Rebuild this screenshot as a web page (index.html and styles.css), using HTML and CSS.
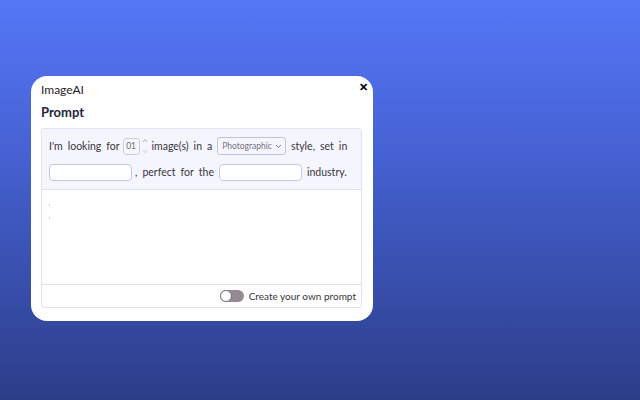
FILE: index.html
```html
<!DOCTYPE html>
<html lang="en">
<head>
    <meta charset="UTF-8" />
    <title>ImageAI</title>
    <link rel="stylesheet" href="styles.css">
</head>
<body>
    <div class="card">
        <div class="card-head">
            <span class="brand">ImageAI</span>
            <span class="close">&#10005;</span>
        </div>
        <h2 class="title">Prompt</h2>
        <div class="prompt">
            <div class="sentence">
                <div class="line">
                    <span>I'm</span><span>looking</span><span>for</span>
                    <span class="num">01</span>
                    <svg class="spin" width="6" height="16" viewBox="0 0 6 16">
                        <path d="M1 4l2-2.5L5 4" fill="none" stroke="#9a9aa8" stroke-width="0.8"/>
                        <path d="M1 12l2 2.5L5 12" fill="none" stroke="#c4c4d0" stroke-width="0.8"/>
                    </svg>
                    <span>image(s)</span><span>in</span><span>a</span>
                    <span class="select">Photographic
                        <svg width="7" height="5" viewBox="0 0 7 5"><path d="M1 1l2.5 2.5L6 1" fill="none" stroke="#6b6fd6" stroke-width="1"/></svg>
                    </span>
                    <span>style,</span><span>set</span><span>in</span>
                </div>
                <div class="line">
                    <span class="field"></span>
                    <span>,</span><span>perfect</span><span>for</span><span>the</span>
                    <span class="field"></span>
                    <span>industry.</span>
                </div>
            </div>
            <div class="editor">
                <i class="dot"></i>
                <i class="dot"></i>
            </div>
            <div class="footer">
                <span class="toggle"><span class="knob"></span></span>
                <span>Create your own prompt</span>
            </div>
        </div>
    </div>
</body>
</html>
```

FILE: styles.css
```css
html, body {
    margin: 0;
    padding: 0;
}
body {
    width: 640px;
    height: 400px;
    background: linear-gradient(180deg, #5577f7 0%, #4763d6 35%, #3a52b2 65%, #2c3d88 100%);
    font-family: Lato, "Open Sans", sans-serif;
    color: #2d2a33;
    padding: 76px 0 0 31px;
    box-sizing: border-box;
}
.card {
    width: 342px;
    height: 245px;
    box-sizing: border-box;
    background: #fff;
    border-radius: 16px;
    padding: 4px 11px 13px 10px;
    display: flex;
    flex-direction: column;
}
.card-head {
    display: flex;
    justify-content: space-between;
    align-items: center;
    height: 18px;
}
.brand {
    font-size: 12px;
    color: #1e1d26;
}
.close {
    font-size: 11px;
    font-weight: 900;
    color: #000;
    margin-right: -6px;
    margin-top: -4px;
}
.title {
    margin: 4px 0 0;
    font-size: 13px;
    font-weight: 700;
    color: #25243a;
    height: 20px;
    line-height: 20px;
}
.prompt {
    margin-top: 6px;
    flex: 1;
    border: 1px solid #dfe1f4;
    border-radius: 3px;
    display: flex;
    flex-direction: column;
    overflow: hidden;
}
.sentence {
    background: #f5f6fd;
    border-bottom: 1px solid #dfe1f4;
    padding: 8px 7px 8px 7px;
    display: flex;
    flex-direction: column;
    gap: 8px;
    font-size: 10.5px;
    color: #3a3540;
}
.line {
    display: flex;
    align-items: center;
    gap: 5px;
    height: 18px;
}
.num {
    border: 1px solid #c8cbee;
    border-radius: 3px;
    height: 15px;
    width: 15px;
    font-size: 8.5px;
    color: #6c6a74;
    display: flex;
    align-items: center;
    justify-content: center;
    margin-left: -2px;
}
.spin {
    margin-left: -3px;
    margin-right: -1px;
}
.select {
    border: 1px solid #bfc2ea;
    border-radius: 3px;
    height: 16px;
    padding: 0 3px 0 4px;
    font-size: 8.5px;
    color: #77737d;
    display: flex;
    align-items: center;
    gap: 3px;
}
.field {
    width: 81px;
    height: 15px;
    border: 1px solid #c3c6ec;
    border-radius: 4px;
    background: #fff;
}
.line .field:first-child {
    margin-right: -2px;
}
.editor {
    flex: 1;
    padding: 14px 7px 0;
    display: flex;
    flex-direction: column;
    gap: 11px;
}
.dot {
    display: block;
    width: 1px;
    height: 2px;
    background: #c9c9cf;
}
.footer {
    height: 22px;
    border-top: 1px solid #dfe1f4;
    display: flex;
    align-items: center;
    justify-content: flex-end;
    gap: 5px;
    padding-right: 5px;
    font-size: 10px;
    color: #3a3540;
}
.toggle {
    width: 24px;
    height: 12px;
    border-radius: 6px;
    background: #968a92;
    position: relative;
}
.knob {
    position: absolute;
    left: 0;
    top: 0;
    width: 10px;
    height: 10px;
    border-radius: 50%;
    background: #fff;
    border: 1px solid #7a7078;
}
```
